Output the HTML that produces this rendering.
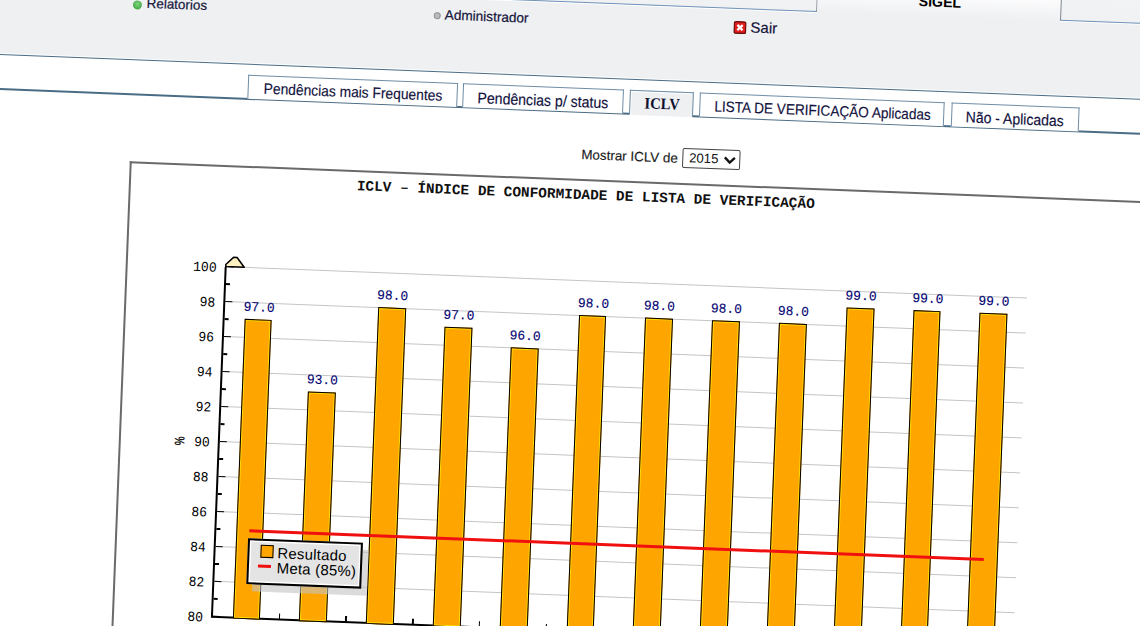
<!DOCTYPE html>
<html><head><meta charset="utf-8">
<style>
html,body{margin:0;padding:0;}
body{width:1140px;height:626px;overflow:hidden;background:#fff;position:relative;font-family:"Liberation Sans",sans-serif;}
#w{position:absolute;left:0;top:0;width:0;height:0;transform:rotate(2.25deg);transform-origin:0 0;}
#w div,#w span{position:absolute;box-sizing:border-box;}
.t{white-space:pre;line-height:1;}
</style></head><body>
<div id="w">
  <!-- header -->
  <div style="left:-60px;top:-120px;width:1320px;height:172.8px;background:#eef0f2;"></div>
  <div style="left:-60px;top:52.8px;width:1320px;height:1px;background:#fafbfc;"></div>
  <div style="left:-60px;top:53.8px;width:1320px;height:1.2px;background:#4a6c84;"></div>
  <div style="left:-60px;top:-120px;width:877px;height:100px;background:linear-gradient(#f7f8f9,#eff1f3);border-right:1.2px solid #808890;border-bottom:1.3px solid #6f93b8;box-shadow:0 1px 0 #fff;"></div>
  <div style="left:817px;top:-120px;width:243px;height:100px;background:linear-gradient(#f3f4f5,#fbfbfc 80%,#eef0f2);"></div>
  <div style="left:1059.6px;top:-120px;width:200px;height:99.2px;background:linear-gradient(#f7f8f9,#eff1f3);border-left:1.2px solid #808890;border-bottom:1.3px solid #6f93b8;box-shadow:0 1px 0 #fff;"></div>
  <span class="t" style="left:918px;top:-42.2px;font-size:14.2px;font-weight:bold;color:#000;">SIGEL</span>

  <div style="left:133px;top:-5.5px;width:9px;height:9px;border-radius:50%;background:radial-gradient(circle at 50% 40%,#7fd37f,#2f9a2f);"></div>
  <span class="t" style="left:146.8px;top:-9.4px;font-size:13.4px;color:#14143a;-webkit-text-stroke:0.2px #14143a;">Relatorios</span>
  <div style="left:434.2px;top:-5px;width:7px;height:7px;border-radius:50%;background:#b9bcbf;border:1px solid #8d9194;"></div>
  <span class="t" style="left:445px;top:-9px;font-size:13.6px;color:#14143a;-webkit-text-stroke:0.2px #14143a;">Administrador</span>
  <svg style="position:absolute;left:733.8px;top:-7.8px;" width="13" height="13" viewBox="0 0 13 13"><rect x="0.7" y="0.7" width="11.6" height="11.6" rx="1.6" fill="#e01e1e" stroke="#6e0c0c" stroke-width="1.4"/><path d="M3.9 3.9 L9.1 9.1 M9.1 3.9 L3.9 9.1" stroke="#fff" stroke-width="2.3"/></svg>
  <span class="t" style="left:751px;top:-10.3px;font-size:15px;color:#14143a;-webkit-text-stroke:0.2px #14143a;">Sair</span>

  <!-- tabs -->
  <div style="left:-60px;top:88.2px;width:693px;height:1.4px;background:#4a6c84;"></div>
  <div style="left:697px;top:88.2px;width:600px;height:1.4px;background:#4a6c84;"></div>
  <div style="left:251px;top:65px;width:210px;height:24px;background:#fff;border:1px solid #6f8ca5;border-bottom:none;"></div>
  <span class="t" style="left:267px;top:71.6px;font-size:13.8px;color:#12123e;-webkit-text-stroke:0.15px #12123e;transform:scaleY(1.1);transform-origin:0 60%;">Pendências mais Frequentes</span>
  <div style="left:466px;top:65px;width:161px;height:24px;background:#fff;border:1px solid #6f8ca5;border-bottom:none;"></div>
  <span class="t" style="left:481px;top:71.6px;font-size:14.1px;color:#12123e;-webkit-text-stroke:0.15px #12123e;transform:scaleY(1.1);transform-origin:0 60%;">Pendências p/ status</span>
  <div style="left:633px;top:65px;width:64px;height:24.6px;background:#eef0f2;border:1px solid #6f8ca5;border-bottom:none;box-shadow:inset 1px 1px 0 #fff;"></div>
  <span class="t" style="left:647.5px;top:70.3px;font-size:16px;transform:scaleX(0.92);transform-origin:0 0;font-weight:bold;font-family:'Liberation Serif',serif;color:#101030;">ICLV</span>
  <div style="left:703px;top:65px;width:245px;height:24px;background:#fff;border:1px solid #6f8ca5;border-bottom:none;"></div>
  <span class="t" style="left:718px;top:71.6px;font-size:13.6px;color:#12123e;-webkit-text-stroke:0.15px #12123e;transform:scaleY(1.1);transform-origin:0 60%;">LISTA DE VERIFICAÇÃO Aplicadas</span>
  <div style="left:955px;top:65px;width:128px;height:24px;background:#fff;border:1px solid #6f8ca5;border-bottom:none;"></div>
  <span class="t" style="left:969.6px;top:71.6px;font-size:14px;color:#12123e;-webkit-text-stroke:0.15px #12123e;transform:scaleY(1.1);transform-origin:0 60%;">Não - Aplicadas</span>

  <!-- mostrar -->
  <span class="t" style="left:587px;top:124.5px;font-size:13.4px;color:#1a1a1a;-webkit-text-stroke:0.15px #1a1a1a;">Mostrar ICLV de</span>
  <div style="left:688.3px;top:121.3px;width:58px;height:20px;background:#fff;border:1px solid #444;border-radius:2px;"></div>
  <span class="t" style="left:694.8px;top:124.3px;font-size:13.2px;color:#111;">2015</span>
  <svg style="position:absolute;left:728.5px;top:126.5px;" width="13" height="9" viewBox="0 0 13 9"><path d="M1.5 1.8 L6.5 6.8 L11.5 1.8" fill="none" stroke="#111" stroke-width="2.4"/></svg>

  <!-- chart box -->
  <div style="left:135.5px;top:156px;width:1100px;height:560px;border:2px solid #6a6a6a;border-right:none;border-bottom:none;background:#fff;"></div>
<span class="t" style="left:363.9px;top:165.1px;font-family:'Liberation Mono',monospace;font-weight:bold;font-size:14.42px;color:#111;">ICLV – ÍNDICE DE CONFORMIDADE DE LISTA DE VERIFICAÇÃO</span>
<div style="left:236.5px;top:572.00px;width:801.5px;height:1.2px;background:#c4c4c4;"></div>
<div style="left:236.5px;top:537.00px;width:801.5px;height:1.2px;background:#c4c4c4;"></div>
<div style="left:236.5px;top:502.00px;width:801.5px;height:1.2px;background:#c4c4c4;"></div>
<div style="left:236.5px;top:467.00px;width:801.5px;height:1.2px;background:#c4c4c4;"></div>
<div style="left:236.5px;top:432.00px;width:801.5px;height:1.2px;background:#c4c4c4;"></div>
<div style="left:236.5px;top:397.00px;width:801.5px;height:1.2px;background:#c4c4c4;"></div>
<div style="left:236.5px;top:362.00px;width:801.5px;height:1.2px;background:#c4c4c4;"></div>
<div style="left:236.5px;top:327.00px;width:801.5px;height:1.2px;background:#c4c4c4;"></div>
<div style="left:236.5px;top:292.00px;width:801.5px;height:1.2px;background:#c4c4c4;"></div>
<div style="left:236.5px;top:257.00px;width:801.5px;height:1.2px;background:#c4c4c4;"></div>
<div style="left:235.5px;top:606.60px;width:1000px;height:2px;background:#000;"></div>
<div style="left:302.54px;top:601.60px;width:1.5px;height:6px;background:#000;"></div>
<div style="left:369.33px;top:601.60px;width:1.5px;height:6px;background:#000;"></div>
<div style="left:436.12px;top:601.60px;width:1.5px;height:6px;background:#000;"></div>
<div style="left:502.92px;top:601.60px;width:1.5px;height:6px;background:#000;"></div>
<div style="left:569.71px;top:601.60px;width:1.5px;height:6px;background:#000;"></div>
<div style="left:636.50px;top:601.60px;width:1.5px;height:6px;background:#000;"></div>
<div style="left:703.29px;top:601.60px;width:1.5px;height:6px;background:#000;"></div>
<div style="left:770.08px;top:601.60px;width:1.5px;height:6px;background:#000;"></div>
<div style="left:836.88px;top:601.60px;width:1.5px;height:6px;background:#000;"></div>
<div style="left:903.67px;top:601.60px;width:1.5px;height:6px;background:#000;"></div>
<div style="left:970.46px;top:601.60px;width:1.5px;height:6px;background:#000;"></div>
<div style="left:1037.25px;top:601.60px;width:1.5px;height:6px;background:#000;"></div>
<div style="left:256.70px;top:309.10px;width:27.8px;height:299.50px;background:#ffa500;border:1.8px solid #000;box-shadow:inset 0 0 0 1px #ffdc00;"></div>
<span class="t" style="left:220.60px;width:100px;text-align:center;top:291.19px;font-family:'Liberation Mono',monospace;font-size:13.5px;transform:scaleX(0.96);color:#000070;-webkit-text-stroke:0.1px #000070;">97.0</span>
<div style="left:323.49px;top:379.10px;width:27.8px;height:229.50px;background:#ffa500;border:1.8px solid #000;box-shadow:inset 0 0 0 1px #ffdc00;"></div>
<span class="t" style="left:287.39px;width:100px;text-align:center;top:361.19px;font-family:'Liberation Mono',monospace;font-size:13.5px;transform:scaleX(0.96);color:#000070;-webkit-text-stroke:0.1px #000070;">93.0</span>
<div style="left:390.28px;top:291.60px;width:27.8px;height:317.00px;background:#ffa500;border:1.8px solid #000;box-shadow:inset 0 0 0 1px #ffdc00;"></div>
<span class="t" style="left:354.18px;width:100px;text-align:center;top:273.69px;font-family:'Liberation Mono',monospace;font-size:13.5px;transform:scaleX(0.96);color:#000070;-webkit-text-stroke:0.1px #000070;">98.0</span>
<div style="left:457.07px;top:309.10px;width:27.8px;height:299.50px;background:#ffa500;border:1.8px solid #000;box-shadow:inset 0 0 0 1px #ffdc00;"></div>
<span class="t" style="left:420.97px;width:100px;text-align:center;top:291.19px;font-family:'Liberation Mono',monospace;font-size:13.5px;transform:scaleX(0.96);color:#000070;-webkit-text-stroke:0.1px #000070;">97.0</span>
<div style="left:523.87px;top:326.60px;width:27.8px;height:282.00px;background:#ffa500;border:1.8px solid #000;box-shadow:inset 0 0 0 1px #ffdc00;"></div>
<span class="t" style="left:487.77px;width:100px;text-align:center;top:308.69px;font-family:'Liberation Mono',monospace;font-size:13.5px;transform:scaleX(0.96);color:#000070;-webkit-text-stroke:0.1px #000070;">96.0</span>
<div style="left:590.66px;top:291.60px;width:27.8px;height:317.00px;background:#ffa500;border:1.8px solid #000;box-shadow:inset 0 0 0 1px #ffdc00;"></div>
<span class="t" style="left:554.56px;width:100px;text-align:center;top:273.69px;font-family:'Liberation Mono',monospace;font-size:13.5px;transform:scaleX(0.96);color:#000070;-webkit-text-stroke:0.1px #000070;">98.0</span>
<div style="left:657.45px;top:291.60px;width:27.8px;height:317.00px;background:#ffa500;border:1.8px solid #000;box-shadow:inset 0 0 0 1px #ffdc00;"></div>
<span class="t" style="left:621.35px;width:100px;text-align:center;top:273.69px;font-family:'Liberation Mono',monospace;font-size:13.5px;transform:scaleX(0.96);color:#000070;-webkit-text-stroke:0.1px #000070;">98.0</span>
<div style="left:724.24px;top:291.60px;width:27.8px;height:317.00px;background:#ffa500;border:1.8px solid #000;box-shadow:inset 0 0 0 1px #ffdc00;"></div>
<span class="t" style="left:688.14px;width:100px;text-align:center;top:273.69px;font-family:'Liberation Mono',monospace;font-size:13.5px;transform:scaleX(0.96);color:#000070;-webkit-text-stroke:0.1px #000070;">98.0</span>
<div style="left:791.03px;top:291.60px;width:27.8px;height:317.00px;background:#ffa500;border:1.8px solid #000;box-shadow:inset 0 0 0 1px #ffdc00;"></div>
<span class="t" style="left:754.93px;width:100px;text-align:center;top:273.69px;font-family:'Liberation Mono',monospace;font-size:13.5px;transform:scaleX(0.96);color:#000070;-webkit-text-stroke:0.1px #000070;">98.0</span>
<div style="left:857.83px;top:274.10px;width:27.8px;height:334.50px;background:#ffa500;border:1.8px solid #000;box-shadow:inset 0 0 0 1px #ffdc00;"></div>
<span class="t" style="left:821.73px;width:100px;text-align:center;top:256.19px;font-family:'Liberation Mono',monospace;font-size:13.5px;transform:scaleX(0.96);color:#000070;-webkit-text-stroke:0.1px #000070;">99.0</span>
<div style="left:924.62px;top:274.10px;width:27.8px;height:334.50px;background:#ffa500;border:1.8px solid #000;box-shadow:inset 0 0 0 1px #ffdc00;"></div>
<span class="t" style="left:888.52px;width:100px;text-align:center;top:256.19px;font-family:'Liberation Mono',monospace;font-size:13.5px;transform:scaleX(0.96);color:#000070;-webkit-text-stroke:0.1px #000070;">99.0</span>
<div style="left:991.41px;top:274.10px;width:27.8px;height:334.50px;background:#ffa500;border:1.8px solid #000;box-shadow:inset 0 0 0 1px #ffdc00;"></div>
<span class="t" style="left:955.31px;width:100px;text-align:center;top:256.19px;font-family:'Liberation Mono',monospace;font-size:13.5px;transform:scaleX(0.96);color:#000070;-webkit-text-stroke:0.1px #000070;">99.0</span>
<div style="left:270.2px;top:519.10px;width:734.7px;height:2.8px;background:#f01010;"></div>
<div style="left:235.2px;top:257.60px;width:1.7px;height:351.0px;background:#000;"></div>
<div style="left:236.5px;top:606.85px;width:7px;height:1.5px;background:#000;"></div>
<div style="left:236.5px;top:589.35px;width:4px;height:1.5px;background:#000;"></div>
<div style="left:236.5px;top:571.85px;width:7px;height:1.5px;background:#000;"></div>
<div style="left:236.5px;top:554.35px;width:4px;height:1.5px;background:#000;"></div>
<div style="left:236.5px;top:536.85px;width:7px;height:1.5px;background:#000;"></div>
<div style="left:236.5px;top:519.35px;width:4px;height:1.5px;background:#000;"></div>
<div style="left:236.5px;top:501.85px;width:7px;height:1.5px;background:#000;"></div>
<div style="left:236.5px;top:484.35px;width:4px;height:1.5px;background:#000;"></div>
<div style="left:236.5px;top:466.85px;width:7px;height:1.5px;background:#000;"></div>
<div style="left:236.5px;top:449.35px;width:4px;height:1.5px;background:#000;"></div>
<div style="left:236.5px;top:431.85px;width:7px;height:1.5px;background:#000;"></div>
<div style="left:236.5px;top:414.35px;width:4px;height:1.5px;background:#000;"></div>
<div style="left:236.5px;top:396.85px;width:7px;height:1.5px;background:#000;"></div>
<div style="left:236.5px;top:379.35px;width:4px;height:1.5px;background:#000;"></div>
<div style="left:236.5px;top:361.85px;width:7px;height:1.5px;background:#000;"></div>
<div style="left:236.5px;top:344.35px;width:4px;height:1.5px;background:#000;"></div>
<div style="left:236.5px;top:326.85px;width:7px;height:1.5px;background:#000;"></div>
<div style="left:236.5px;top:309.35px;width:4px;height:1.5px;background:#000;"></div>
<div style="left:236.5px;top:291.85px;width:7px;height:1.5px;background:#000;"></div>
<div style="left:236.5px;top:274.35px;width:4px;height:1.5px;background:#000;"></div>
<div style="left:236.5px;top:256.85px;width:7px;height:1.5px;background:#000;"></div>
<span class="t" style="left:127.18px;width:100px;text-align:right;top:601.88px;font-family:'Liberation Mono',monospace;font-size:14px;color:#000;transform:scaleX(0.93);transform-origin:100% 0;">80</span>
<span class="t" style="left:127.18px;width:100px;text-align:right;top:566.88px;font-family:'Liberation Mono',monospace;font-size:14px;color:#000;transform:scaleX(0.93);transform-origin:100% 0;">82</span>
<span class="t" style="left:127.18px;width:100px;text-align:right;top:531.88px;font-family:'Liberation Mono',monospace;font-size:14px;color:#000;transform:scaleX(0.93);transform-origin:100% 0;">84</span>
<span class="t" style="left:127.18px;width:100px;text-align:right;top:496.88px;font-family:'Liberation Mono',monospace;font-size:14px;color:#000;transform:scaleX(0.93);transform-origin:100% 0;">86</span>
<span class="t" style="left:127.18px;width:100px;text-align:right;top:461.88px;font-family:'Liberation Mono',monospace;font-size:14px;color:#000;transform:scaleX(0.93);transform-origin:100% 0;">88</span>
<span class="t" style="left:127.18px;width:100px;text-align:right;top:426.88px;font-family:'Liberation Mono',monospace;font-size:14px;color:#000;transform:scaleX(0.93);transform-origin:100% 0;">90</span>
<span class="t" style="left:127.18px;width:100px;text-align:right;top:391.88px;font-family:'Liberation Mono',monospace;font-size:14px;color:#000;transform:scaleX(0.93);transform-origin:100% 0;">92</span>
<span class="t" style="left:127.18px;width:100px;text-align:right;top:356.88px;font-family:'Liberation Mono',monospace;font-size:14px;color:#000;transform:scaleX(0.93);transform-origin:100% 0;">94</span>
<span class="t" style="left:127.18px;width:100px;text-align:right;top:321.88px;font-family:'Liberation Mono',monospace;font-size:14px;color:#000;transform:scaleX(0.93);transform-origin:100% 0;">96</span>
<span class="t" style="left:127.18px;width:100px;text-align:right;top:286.88px;font-family:'Liberation Mono',monospace;font-size:14px;color:#000;transform:scaleX(0.93);transform-origin:100% 0;">98</span>
<span class="t" style="left:127.18px;width:100px;text-align:right;top:251.88px;font-family:'Liberation Mono',monospace;font-size:14px;color:#000;transform:scaleX(0.93);transform-origin:100% 0;">100</span>
<svg style="position:absolute;left:230px;top:242px;overflow:visible" width="30" height="20"><polygon points="6,15.5 6,13.5 13.5,6 17,6 24.5,15.5" fill="#fff2c2" stroke="#000" stroke-width="1.5" stroke-linejoin="round"/></svg>
<span class="t" style="left:187px;top:426px;width:20px;height:15px;text-align:center;font-family:'Liberation Sans',sans-serif;font-weight:bold;font-size:14px;color:#111;transform:rotate(-90deg) scaleX(0.72);">%</span>
<div style="left:275px;top:535px;width:115px;height:46px;background:rgba(195,195,195,0.6);"></div>
<div style="left:269px;top:527.9px;width:115px;height:46px;background:#e4e4e4;border:2px solid #000;box-shadow:inset 0 0 0 1.5px #fff;"></div>
<div style="left:281.5px;top:534px;width:13.5px;height:12.5px;background:#ffa500;border:1.5px solid #000;"></div>
<span class="t" style="left:299px;top:535px;font-size:14.9px;color:#000;letter-spacing:0.25px;">Resultado</span>
<div style="left:280.3px;top:554.1px;width:12.4px;height:3px;background:#f01010;"></div>
<span class="t" style="left:298.8px;top:549.2px;font-size:15px;color:#000;letter-spacing:0.2px;">Meta (85%)</span>
</div>
</body></html>
